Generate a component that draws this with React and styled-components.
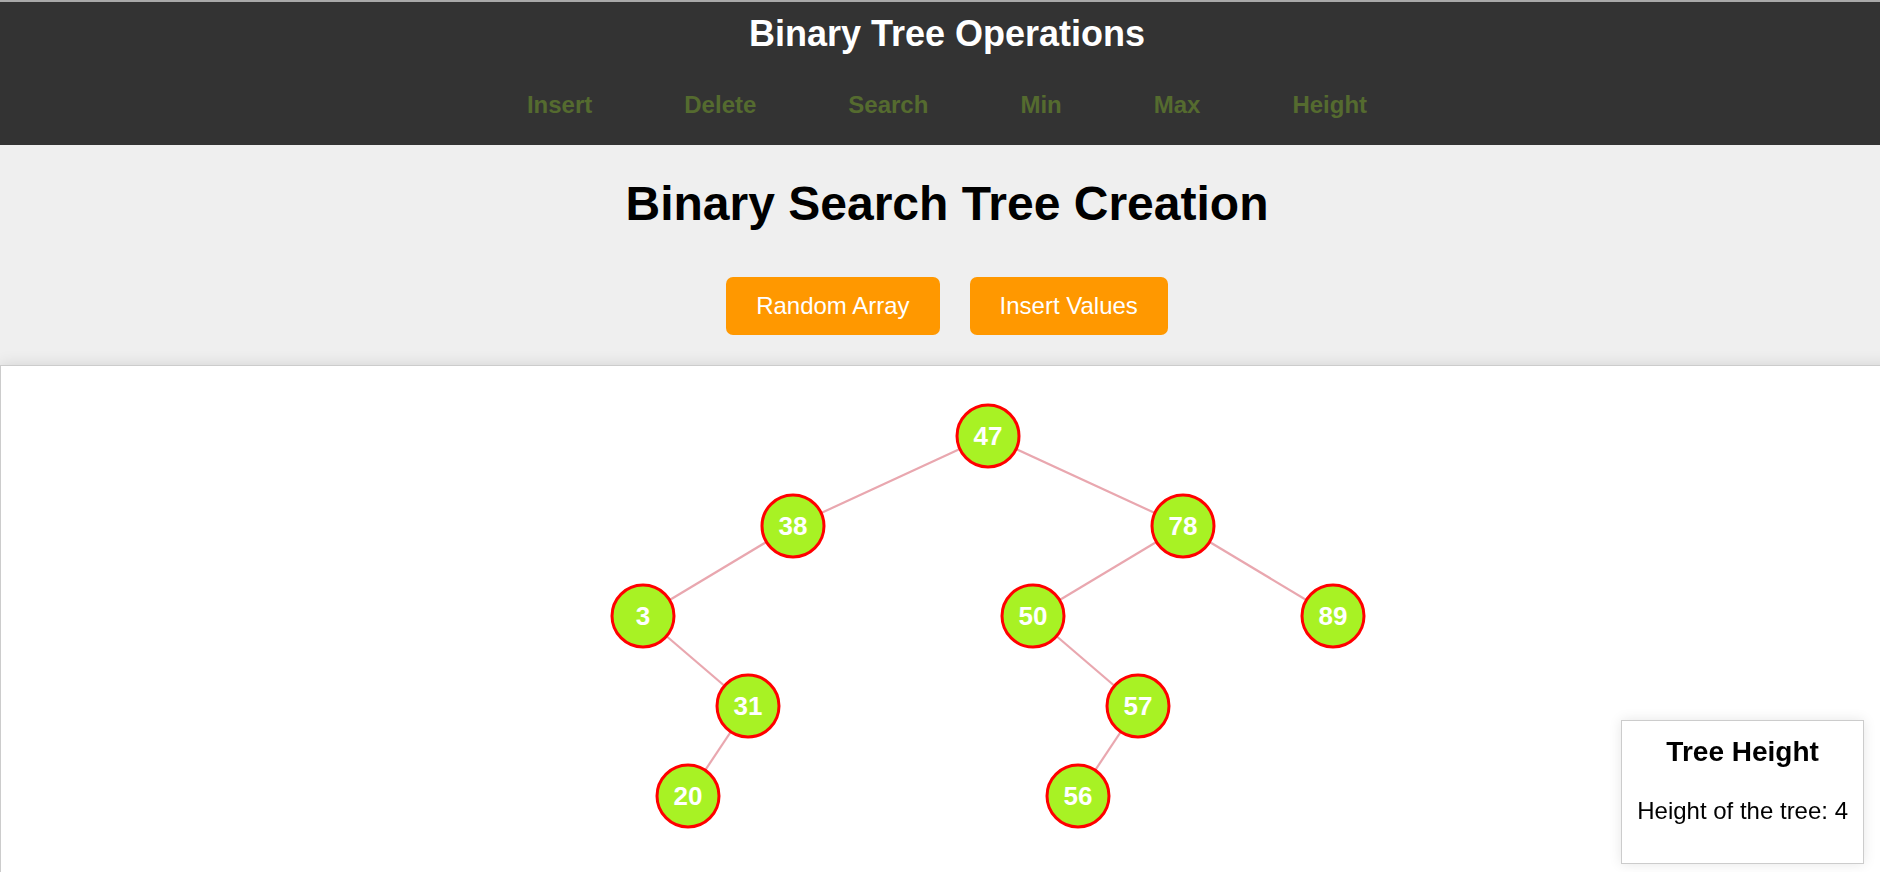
import React from "react";
import styled, { createGlobalStyle } from "styled-components";

const GlobalStyle = createGlobalStyle`
  html, body {
    margin: 0;
    padding: 0;
    overflow: hidden;
    background: #efefef;
    font-family: "Liberation Sans", Arial, sans-serif;
  }
`;

const Page = styled.div`
  height: 100vh;
  overflow: hidden;
  display: flex;
  flex-direction: column;
`;

const Header = styled.header`
  background: #333333;
  border-top: 2px solid #a9a9a9;
  padding: 11px 0 26px 14px;
  display: flex;
  flex-direction: column;
  align-items: center;
`;

const HeaderTitle = styled.h1`
  margin: 0;
  color: #ffffff;
  font-size: 36px;
  line-height: 42px;
  font-weight: 700;
`;

const Nav = styled.nav`
  margin-top: 36px;
  display: flex;
  gap: 92px;
`;

const NavLink = styled.a`
  color: #556b2f;
  font-size: 24px;
  line-height: 28px;
  font-weight: 700;
  text-decoration: none;
  cursor: pointer;
`;

const Hero = styled.section`
  padding: 31px 0 30px 14px;
  display: flex;
  flex-direction: column;
  align-items: center;
`;

const HeroTitle = styled.h1`
  margin: 0;
  color: #000;
  font-size: 48px;
  line-height: 56px;
  font-weight: 700;
`;

const ButtonRow = styled.div`
  margin-top: 45px;
  display: flex;
  gap: 30px;
`;

const ActionButton = styled.button`
  background: #ff9800;
  color: #ffffff;
  border: none;
  border-radius: 7px;
  padding: 15px 30px;
  font-family: "Liberation Sans", Arial, sans-serif;
  font-size: 24px;
  line-height: 28px;
  cursor: pointer;
`;

const Canvas = styled.div`
  flex: 1 0 auto;
  min-height: 560px;
  width: calc(100% + 96px);
  background: #ffffff;
  border: 1px solid #cccccc;
  box-shadow: 0 0 15px rgba(0, 0, 0, 0.12);
  position: relative;
`;

const TreeSvg = styled.svg`
  display: block;
  width: 100%;
  height: 500px;
`;

const HeightPanel = styled.div`
  position: fixed;
  right: 16px;
  bottom: 8px;
  background: #ffffff;
  border: 1px solid #cccccc;
  box-shadow: 0 0 12px rgba(0, 0, 0, 0.1);
  padding: 15px 15px 38px;
  text-align: center;
`;

const PanelTitle = styled.h3`
  margin: 0 0 29px;
  font-size: 28px;
  line-height: 32px;
  font-weight: 700;
  color: #000;
`;

const PanelText = styled.p`
  margin: 0;
  font-size: 24px;
  line-height: 28px;
  color: #000;
`;

const nodes = {
  47: [987, 70],
  38: [792, 160],
  78: [1182, 160],
  3: [642, 250],
  50: [1032, 250],
  89: [1332, 250],
  31: [747, 340],
  57: [1137, 340],
  20: [687, 430],
  56: [1077, 430],
};

const edges = [
  [47, 38],
  [47, 78],
  [38, 3],
  [78, 50],
  [78, 89],
  [3, 31],
  [50, 57],
  [31, 20],
  [57, 56],
];

const navItems = ["Insert", "Delete", "Search", "Min", "Max", "Height"];

export default function App() {
  return (
    <>
      <GlobalStyle />
      <Page>
        <Header>
          <HeaderTitle>Binary Tree Operations</HeaderTitle>
          <Nav>
            {navItems.map((n) => (
              <NavLink key={n}>{n}</NavLink>
            ))}
          </Nav>
        </Header>
        <Hero>
          <HeroTitle>Binary Search Tree Creation</HeroTitle>
          <ButtonRow>
            <ActionButton>Random Array</ActionButton>
            <ActionButton>Insert Values</ActionButton>
          </ButtonRow>
        </Hero>
        <Canvas>
          <TreeSvg>
            {edges.map(([a, b]) => (
              <line
                key={`${a}-${b}`}
                x1={nodes[a][0]}
                y1={nodes[a][1]}
                x2={nodes[b][0]}
                y2={nodes[b][1]}
                stroke="#e9a7af"
                strokeWidth="2.2"
              />
            ))}
            {Object.entries(nodes).map(([v, [x, y]]) => (
              <g key={v}>
                <circle cx={x} cy={y} r="31" fill="#a8f224" stroke="#ff0000" strokeWidth="3" />
                <text
                  x={x}
                  y={y + 9}
                  textAnchor="middle"
                  fill="#ffffff"
                  fontFamily="Liberation Sans, Arial, sans-serif"
                  fontWeight="700"
                  fontSize="26"
                >
                  {v}
                </text>
              </g>
            ))}
          </TreeSvg>
        </Canvas>
        <HeightPanel>
          <PanelTitle>Tree Height</PanelTitle>
          <PanelText>Height of the tree: 4</PanelText>
        </HeightPanel>
      </Page>
    </>
  );
}
